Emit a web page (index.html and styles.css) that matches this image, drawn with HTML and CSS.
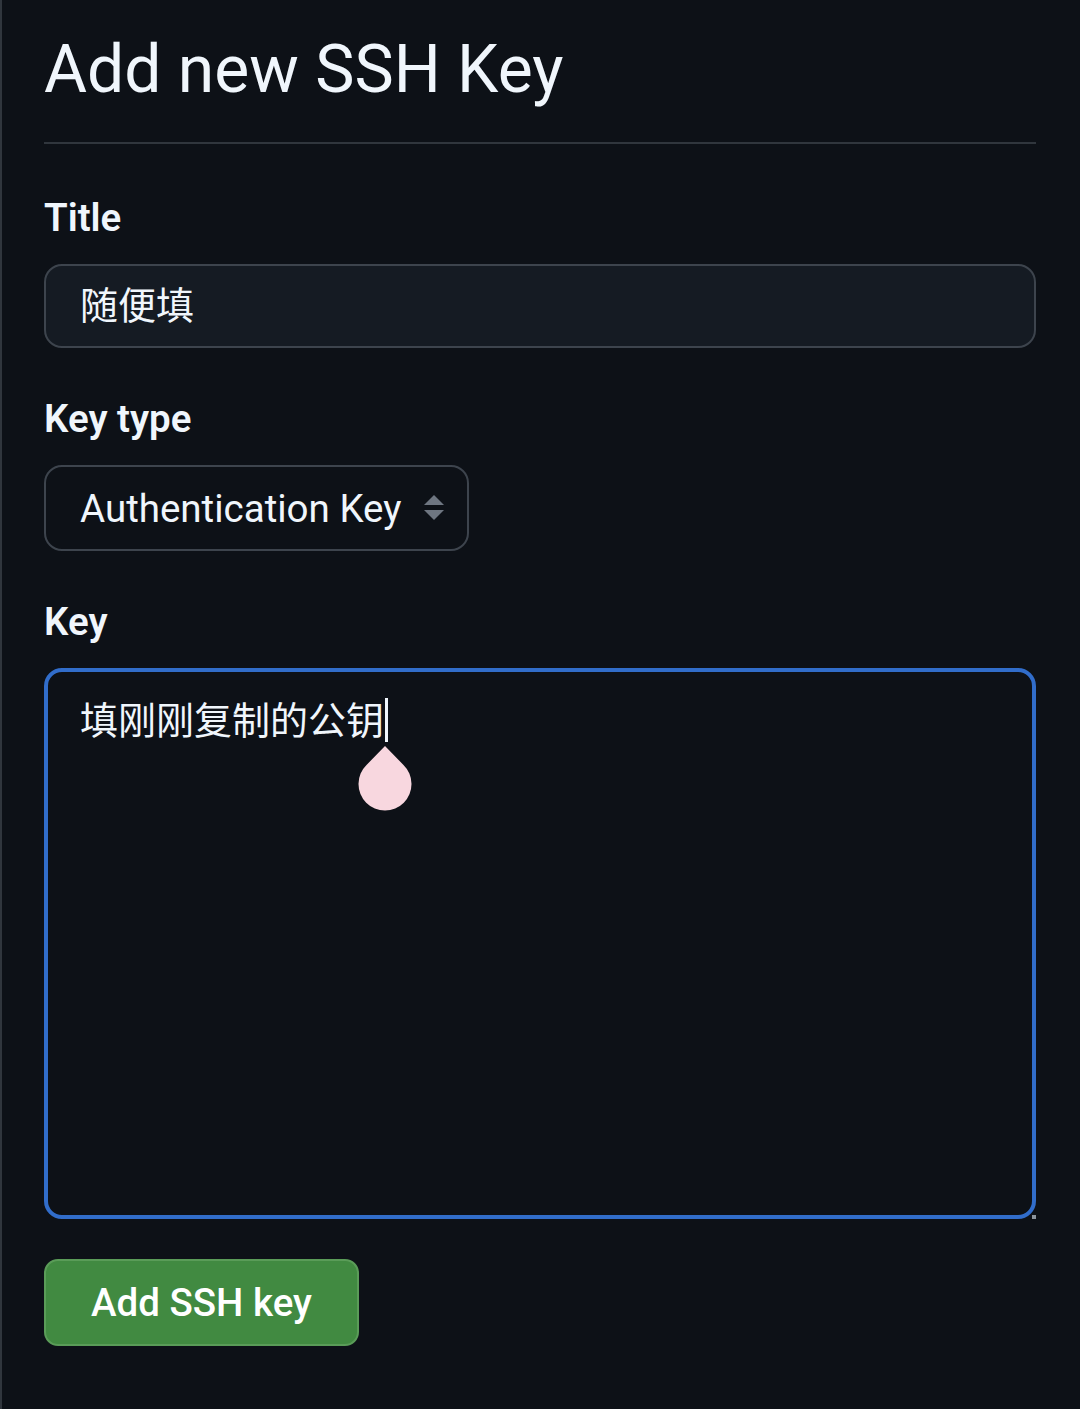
FILE: index.html
```html
<!DOCTYPE html>
<html lang="zh-CN">
<head>
    <meta charset="UTF-8">
    <meta name="viewport" content="width=device-width, initial-scale=1.0">
    <title>Add new SSH Key</title>
    <link rel="stylesheet" href="styles.css">
</head>
<body>
    <div class="page">
        <h1 class="title">Add new SSH Key</h1>
        <form class="form">
            <div class="field">
                <label class="label">Title</label>
                <div class="input">随便填</div>
            </div>
            <div class="field">
                <label class="label">Key type</label>
                <div class="select">
                    <span>Authentication Key</span>
                    <svg class="arrows" width="22" height="30" viewBox="0 0 22 30">
                        <path d="M11 2 L21 12 L1 12 Z" fill="#6e7681"/>
                        <path d="M1 17 L21 17 L11 27 Z" fill="#6e7681"/>
                    </svg>
                </div>
            </div>
            <div class="field">
                <label class="label">Key</label>
                <div class="textarea">
                    <span class="text">填刚刚复制的公钥<span class="caret"></span></span>
                    <svg class="handle" width="56" height="66" viewBox="0 0 56 66">
                        <path d="M28 1 L46.5 20 A26.5 26.5 0 1 1 9.5 20 Z" fill="#f8d7df"/>
                    </svg>
                    <span class="grip"></span>
                </div>
            </div>
            <div class="actions">
                <button type="button" class="btn">Add SSH key</button>
            </div>
        </form>
    </div>
</body>
</html>
```

FILE: styles.css
```css
body {
    margin: 0;
    background: #0d1117;
    color: #f0f6fc;
    font-family: Roboto, "Noto Sans CJK SC", sans-serif;
    border-left: 2px solid #30363d;
    min-height: 1409px;
    box-sizing: border-box;
}
.page {
    padding: 30px 44px 0 42px;
}
.title {
    margin: 0;
    font-size: 66px;
    font-weight: 400;
    line-height: 80px;
    padding-bottom: 32px;
    border-bottom: 2px solid #30363d;
}
.form {
    display: flex;
    flex-direction: column;
}
.field {
    display: flex;
    flex-direction: column;
    align-items: flex-start;
}
.label {
    font-size: 38.5px;
    font-weight: 600;
    line-height: 48px;
    margin: 47px 0 22px;
}
.field:first-child .label {
    margin-top: 50px;
}
.input {
    align-self: stretch;
    height: 80px;
    box-sizing: content-box;
    border: 2px solid #3d444d;
    border-radius: 18px;
    background: #151b23;
    padding: 0 34px;
    font-size: 38px;
    line-height: 80px;
}
.select {
    display: flex;
    align-items: center;
    gap: 22px;
    height: 82px;
    border: 2px solid #3d444d;
    border-radius: 18px;
    padding: 0 22px 0 34px;
    font-size: 38.5px;
}
.textarea {
    position: relative;
    align-self: stretch;
    height: 497px;
    border: 4px solid #316dca;
    border-radius: 18px;
    padding: 23px 32px;
    font-size: 38px;
    line-height: 52px;
}
.caret {
    display: inline-block;
    width: 3px;
    height: 44px;
    background: #f0f6fc;
    vertical-align: -8px;
    margin-left: 1px;
}
.handle {
    position: absolute;
    left: 309px;
    top: 73px;
}
.grip {
    position: absolute;
    right: -4px;
    bottom: -4px;
    width: 4px;
    height: 4px;
    background: #8b949e;
}
.actions {
    margin-top: 40px;
}
.btn {
    font-family: Roboto, sans-serif;
    font-size: 38.5px;
    font-weight: 500;
    color: #ffffff;
    background: #418a41;
    border: 2px solid #5a9c58;
    border-radius: 14px;
    height: 87px;
    padding: 0 45px;
}
```
